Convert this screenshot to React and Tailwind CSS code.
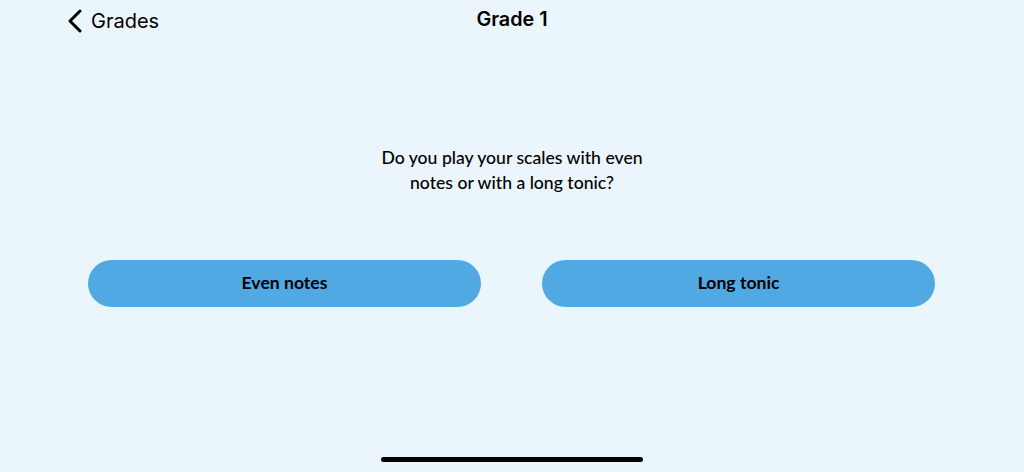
export default function App() {
  return (
    <div className="w-[1024px] h-[472px] bg-[#ebf5fc] flex flex-col overflow-hidden" style={{ fontFamily: "Lato, 'Noto Sans', sans-serif" }}>
      <div className="relative h-[40px] flex items-center">
        <div className="flex items-center pl-[67px] gap-[8px] pt-[1px]">
          <svg width="16" height="24" viewBox="0 0 16 24" fill="none">
            <path d="M13 2 L3 12 L13 22" stroke="#000" strokeWidth="3" strokeLinecap="round" strokeLinejoin="round" />
          </svg>
          <span className="text-[20px] text-black leading-none" style={{ fontFamily: "Inter, 'Noto Sans', sans-serif" }}>Grades</span>
        </div>
        <div className="absolute left-0 right-0 top-0 h-[40px] flex items-center justify-center pointer-events-none">
          <span className="text-[19.8px] font-semibold text-black leading-none" style={{ fontFamily: "Inter, 'Noto Sans', sans-serif" }}>Grade 1</span>
        </div>
      </div>
      <div className="mt-[105px] flex justify-center">
        <p className="text-[17.6px] leading-[25px] text-black text-center font-medium w-[300px]">
          Do you play your scales with even notes or with a long tonic?
        </p>
      </div>
      <div className="mt-[65px] flex justify-between pl-[88px] pr-[89px]">
        <button className="w-[393px] h-[47px] rounded-full bg-[#51a9e3] text-black text-[17.6px] font-bold">Even notes</button>
        <button className="w-[393px] h-[47px] rounded-full bg-[#51a9e3] text-black text-[17.6px] font-bold">Long tonic</button>
      </div>
      <div className="mt-auto mb-[10px] flex justify-center">
        <div className="w-[262px] h-[5px] rounded-full bg-black" />
      </div>
    </div>
  );
}
